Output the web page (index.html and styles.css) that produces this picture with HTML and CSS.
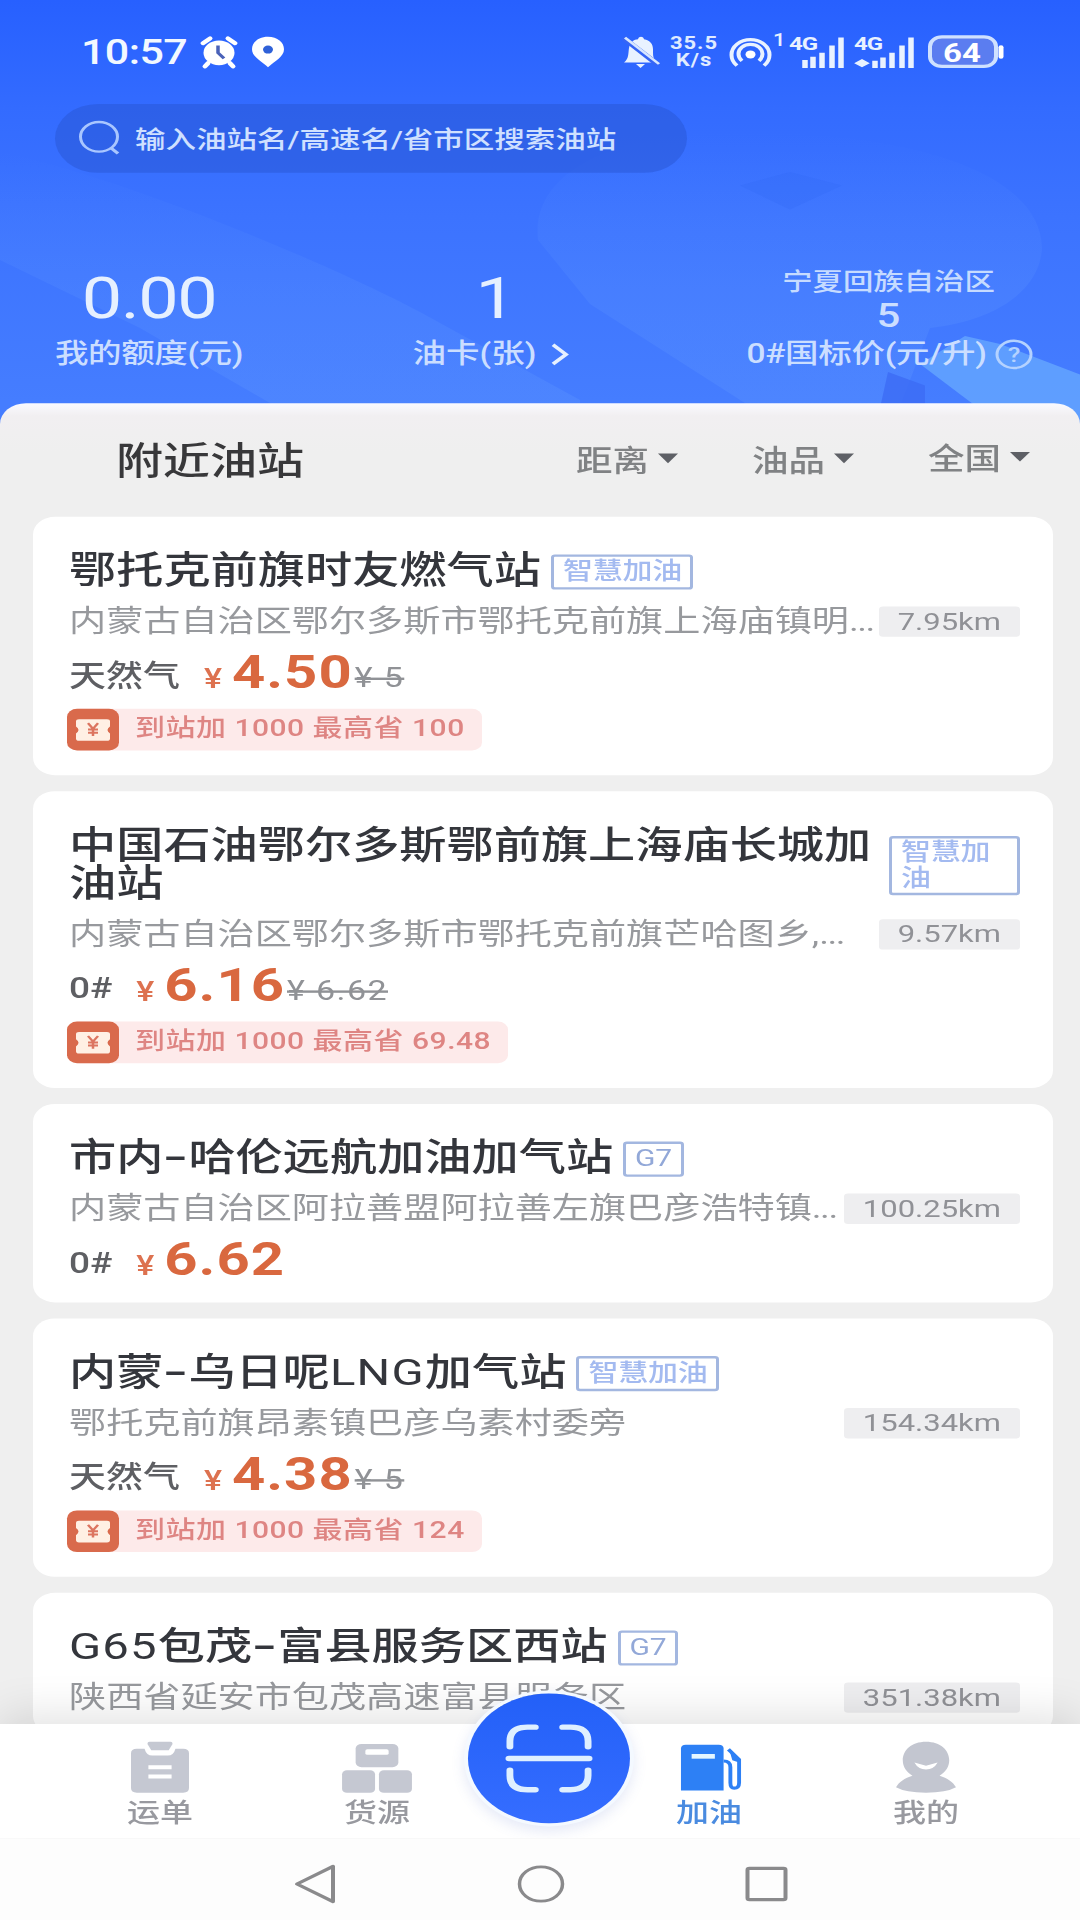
FILE: index.html
```html
<!DOCTYPE html>
<html lang="zh-CN">
<head>
<meta charset="utf-8">
<title>附近油站</title>
<link rel="stylesheet" href="styles.css">
</head>
<body>
<div class="viewport">
<div class="phone">

  <header class="hero">
    <svg class="hero-art" viewBox="0 0 1080 540" preserveAspectRatio="none" aria-hidden="true">
      <defs>
        <linearGradient id="band" x1="0" y1="0" x2="0" y2="1"><stop offset="0" stop-color="#5a92ff" stop-opacity="0"/><stop offset=".5" stop-color="#5a92ff" stop-opacity=".25"/><stop offset="1" stop-color="#5a92ff" stop-opacity=".4"/></linearGradient>
      </defs>
      <path d="M0 190C120 220 330 330 420 390L580 500V540H320L140 410L0 325z" fill="url(#band)"/>
      <path d="M538 300C530 200 640 165 740 165C900 165 1040 210 1042 310C1040 360 1000 400 930 410L890 540H790L590 380z" fill="url(#band)"/>
      <path d="M740 232L790 215L842 232L790 262z" fill="#2f66f2" opacity=".25"/>
      <path d="M920 455L965 420L1000 430L1080 468V540H1010z" fill="#6db0ff" opacity=".65"/>
      <path d="M888 465L925 482V510H880z" fill="#3c6cf5" opacity=".8"/>
    </svg>

    <div class="status">
      <span class="clock">10:57</span>
      <svg class="i-alarm" width="38" height="40" viewBox="0 0 38 40"><circle cx="19" cy="21" r="15.500" fill="#fff"/><path d="M3 9L10 3M35 9L28 3M8 34L5 38M30 34L33 38" stroke="#fff" stroke-width="5" stroke-linecap="round"/><path d="M18 12V21L24 28" fill="none" stroke="#4a62b8" stroke-width="3.500"/></svg>
      <svg class="i-pin" width="34" height="40" viewBox="0 0 34 40"><path d="M17 1C7.500 1 1 8 1 16.500C1 26 10 31 17 39C24 31 33 26 33 16.500C33 8 26.500 1 17 1z" fill="#fff"/><circle cx="17" cy="17" r="5" fill="#2f61d8"/></svg>
      <span class="grow"></span>
      <svg width="37" height="42" viewBox="0 0 37 42"><path d="M2 34C7 29 6 24 7 16C8 9 12 5 16 5C17 1 21 1 22 5C28 6 31 11 31 18C31 27 31 29 35 34zM14 36H23L18.500 41z" fill="#e9f2ff"/><path d="M1 3L36 37" stroke="#3565f6" stroke-width="6"/><path d="M3 3L37 36" stroke="#d7e6ff" stroke-width="3"/></svg>
      <span class="speed"><span>35.5</span><span>K/s</span></span>
      <svg class="i-hot" width="43" height="40" viewBox="0 0 43 40"><g fill="none" stroke="#e9f2ff" stroke-width="4"><path d="M8 37A19 19 0 1 1 35 37"/><path d="M13 31A12 12 0 1 1 30 31"/></g><circle cx="21.500" cy="23" r="5" fill="#fff"/></svg>
      <span class="hot-n">1</span>
      <svg class="i-sig1" width="56" height="42" viewBox="0 0 56 42"><text class="net" x="0" y="19">4G</text><path d="M16 41V31M24 41V27M33 41V22M43 41V13M52 41V3" stroke="#e9f2ff" stroke-width="5.500"/></svg>
      <svg class="i-sig2" width="61" height="42" viewBox="0 0 61 42"><text class="net" x="0" y="19">4G</text><path d="M21 41V32M29 41V28M38 41V22M48 41V13M57 41V3" stroke="#e9f2ff" stroke-width="5.500"/><path d="M2 35L8 31L14 35L8 39z" fill="#e9f2ff" stroke="#e9f2ff" stroke-width="2"/></svg>
      <svg class="i-bat" width="76" height="42" viewBox="0 0 76 42"><rect x="2" y="2" width="66" height="37" rx="12" fill="#5b7df0" stroke="#cfe1ff" stroke-width="4"/><path d="M73 15V27" stroke="#fff" stroke-width="5" stroke-linecap="round"/><text class="bat" x="34" y="33" text-anchor="middle">64</text></svg>
    </div>

    <div class="search">
      <svg width="42" height="44" viewBox="0 0 42 44"><circle cx="20" cy="21" r="18.500" fill="none" stroke="#a9c6ff" stroke-width="3"/><path d="M32 35L39 42" stroke="#a9c6ff" stroke-width="3.500"/></svg>
      <span>输入油站名/高速名/省市区搜索油站</span>
    </div>

    <div class="stats">
      <div class="stat s1"><b>0.00</b><span>我的额度(元)</span></div>
      <div class="stat s2"><b>1</b><span>油卡(张)<svg width="20" height="30" viewBox="0 0 20 30"><path d="M3 3L16 15L3 27" fill="none" stroke="#e6f0ff" stroke-width="4"/></svg></span></div>
      <div class="stat s3"><i>宁夏回族自治区</i><em>5</em><span>0#国标价(元/升)<svg width="38" height="38" viewBox="0 0 38 38"><circle cx="19" cy="19" r="17" fill="none" stroke="#b4d2ff" stroke-width="3"/><text class="qm" x="19" y="28" text-anchor="middle">?</text></svg></span></div>
    </div>
  </header>

  <main class="panel">
    <div class="filters">
      <h1>附近油站</h1>
      <span class="filter f1">距离</span>
      <span class="filter f2">油品</span>
      <span class="filter f3">全国</span>
    </div>

    <div class="list">
      <article class="card">
        <div class="head"><h2>鄂托克前旗时友燃气站</h2><span class="tag">智慧加油</span></div>
        <div class="addr"><p>内蒙古自治区鄂尔多斯市鄂托克前旗上海庙镇明<span class="dots">...</span></p><span class="km">7.95km</span></div>
        <div class="price"><span class="fuel">天然气</span><span class="yen">¥</span><b>4.50</b><s>¥ 5</s></div>
        <div class="coupon"><svg width="52" height="52" viewBox="0 0 52 52"><rect width="52" height="52" rx="10" fill="#d96a4c"/><path d="M12 13H40Q43 13 43 16V22Q38 26 43 31V37Q43 40 40 40H12Q9 40 9 37V31Q14 26 9 22V16Q9 13 12 13z" fill="#fff0e4"/><path d="M21 18L26 25L31 18M26 25V34M21 26H31M21 30H31" stroke="#dc7560" stroke-width="2.500" fill="none"/></svg><span>到站加 1000 最高省 100</span></div>
      </article>

      <article class="card">
        <div class="head"><h2>中国石油鄂尔多斯鄂前旗上海庙长城加油站</h2><span class="tag tag-wrap">智慧加油</span></div>
        <div class="addr"><p>内蒙古自治区鄂尔多斯市鄂托克前旗芒哈图乡,<span class="dots">...</span></p><span class="km">9.57km</span></div>
        <div class="price"><span class="fuel">0#</span><span class="yen">¥</span><b>6.16</b><s>¥ 6.62</s></div>
        <div class="coupon"><svg width="52" height="52" viewBox="0 0 52 52"><rect width="52" height="52" rx="10" fill="#d96a4c"/><path d="M12 13H40Q43 13 43 16V22Q38 26 43 31V37Q43 40 40 40H12Q9 40 9 37V31Q14 26 9 22V16Q9 13 12 13z" fill="#fff0e4"/><path d="M21 18L26 25L31 18M26 25V34M21 26H31M21 30H31" stroke="#dc7560" stroke-width="2.500" fill="none"/></svg><span>到站加 1000 最高省 69.48</span></div>
      </article>

      <article class="card">
        <div class="head"><h2>市内<span class="dash">-</span>哈伦远航加油加气站</h2><span class="tag tag-g7">G7</span></div>
        <div class="addr"><p>内蒙古自治区阿拉善盟阿拉善左旗巴彦浩特镇<span class="dots">...</span></p><span class="km">100.25km</span></div>
        <div class="price"><span class="fuel">0#</span><span class="yen">¥</span><b>6.62</b></div>
      </article>

      <article class="card">
        <div class="head"><h2>内蒙<span class="dash">-</span>乌日呢<span class="latin">LNG</span>加气站</h2><span class="tag">智慧加油</span></div>
        <div class="addr"><p>鄂托克前旗昂素镇巴彦乌素村委旁</p><span class="km">154.34km</span></div>
        <div class="price"><span class="fuel">天然气</span><span class="yen">¥</span><b>4.38</b><s>¥ 5</s></div>
        <div class="coupon"><svg width="52" height="52" viewBox="0 0 52 52"><rect width="52" height="52" rx="10" fill="#d96a4c"/><path d="M12 13H40Q43 13 43 16V22Q38 26 43 31V37Q43 40 40 40H12Q9 40 9 37V31Q14 26 9 22V16Q9 13 12 13z" fill="#fff0e4"/><path d="M21 18L26 25L31 18M26 25V34M21 26H31M21 30H31" stroke="#dc7560" stroke-width="2.500" fill="none"/></svg><span>到站加 1000 最高省 124</span></div>
      </article>

      <article class="card">
        <div class="head"><h2><span class="latin">G65</span>包茂<span class="dash">-</span>富县服务区西站</h2><span class="tag tag-g7">G7</span></div>
        <div class="addr"><p>陕西省延安市包茂高速富县服务区</p><span class="km">351.38km</span></div>
      </article>
    </div>
  </main>

  <nav class="tabs">
    <a class="tab t1"><svg width="58" height="66" viewBox="0 0 60 68"><path d="M6 10H14Q16 19 22 19H38Q44 19 46 10H54Q60 10 60 16V61Q60 67 54 67H6Q0 67 0 61V16Q0 10 6 10z" fill="#c5c8d2"/><path d="M19 1H41Q43 1 43 4L39 12H21L17 4Q17 1 19 1z" fill="#c5c8d2"/><path d="M18 34H42M18 46H42" stroke="#fff" stroke-width="5"/></svg><span>运单</span></a>
    <a class="tab t2"><svg width="70" height="66" viewBox="0 0 72 68"><g fill="#c5c8d2"><rect x="14" y="4" width="44" height="30" rx="6"/><rect x="0" y="38" width="34" height="29" rx="5"/><rect x="38" y="38" width="34" height="29" rx="5"/></g><rect x="24" y="11" width="24" height="7" rx="2" fill="#fff"/></svg><span>货源</span></a>
    <a class="fab"><svg width="86" height="86" viewBox="0 0 88 88"><path d="M4 29V22Q4 4 22 4H30M58 4H66Q84 4 84 22V29M84 59V66Q84 84 66 84H58M30 84H22Q4 84 4 66V59M3 44H85" fill="none" stroke="#dff0ff" stroke-width="7" stroke-linecap="round"/></svg></a>
    <a class="tab t3"><svg width="62" height="66" viewBox="0 0 64 68"><path d="M6 5H40Q45 5 45 10V64H1V10Q1 5 6 5z" fill="#2d80f5"/><path d="M12 20H36" stroke="#e4f6ff" stroke-width="6"/><path d="M45 26Q52 26 52 34V54Q52 61 56 61Q61 61 61 54V24L50 11" fill="none" stroke="#2d80f5" stroke-width="4"/><path d="M51 12L61 22V28L54 25z" fill="#2d80f5"/></svg><span>加油</span></a>
    <a class="tab t4"><svg width="60" height="66" viewBox="0 0 62 68"><path d="M31 1C16 1 7 12 7 25C7 34 11 40 17 45C9 48 3 53 0 60Q10 67 31 67T62 60C59 53 53 48 45 45C51 40 55 34 55 25C55 12 46 1 31 1z" fill="#c3c6d0"/><path d="M19 28L31 32L43 28Q39 37 31 37T19 28z" fill="#fff"/></svg><span>我的</span></a>
  </nav>

  <footer class="sysnav">
    <svg width="44" height="52" viewBox="0 0 44 52"><path d="M40 4V48L4 26z" fill="none" stroke="#8a8a8c" stroke-width="4" stroke-linejoin="round"/></svg>
    <svg width="48" height="48" viewBox="0 0 48 48"><circle cx="24" cy="24" r="21.500" fill="none" stroke="#8a8a8c" stroke-width="3.500"/></svg>
    <svg width="44" height="44" viewBox="0 0 44 44"><rect x="2.500" y="2.500" width="38" height="39" rx="2" fill="none" stroke="#8a8a8c" stroke-width="4"/></svg>
  </footer>

</div>
</div>
</body>
</html>
```
FILE: styles.css
```css
* { box-sizing: border-box; }
body, h1, h2, p { margin: 0; }
body { font-family: Roboto, "Noto Sans CJK SC", sans-serif; background: #efeff0; }
svg { display: block; flex: none; overflow: visible; }

/* 1080x2400 phone layout squeezed into a 1080x1920 frame */
.viewport { width: 1080px; height: 1920px; overflow: hidden; }
.phone {
  width: 1080px; height: 2400px; overflow: hidden;
  display: flex; flex-direction: column;
  transform: scaleY(.8); transform-origin: 0 0;
}

.hero {
  position: relative; flex: none; height: 540px; color: #e6f0ff;
  background: linear-gradient(#2760ff 0, #336bff 25%, #3c73ff 50%, #457dff 93%);
}
.hero-art { position: absolute; left: 0; top: 0; width: 1080px; height: 540px; }

.status { position: relative; display: flex; align-items: center; height: 130px; padding: 0 76px 0 81px; }
.clock { font-size: 43px; font-weight: 500; letter-spacing: -.6px; width: 119px; color: #f2f8ff; }
.i-pin { margin-left: 13px; }
.grow { flex: 1; }
.speed { display: flex; flex-direction: column; align-items: center; font-size: 22px; line-height: 22px; font-weight: 700; width: 60px; margin: 0 5px; color: #e0ecff; letter-spacing: 1px; }
.hot-n { font-size: 22px; font-weight: 500; width: 17px; padding-left: 1px; align-self: flex-start; margin-top: 38px; }
.i-sig2 { margin-left: 9px; }
.i-bat { margin-left: 13px; }
.net { font: 700 24px Roboto, sans-serif; fill: #e9f2ff; letter-spacing: -1px; }
.bat { font: 700 33px Roboto, sans-serif; fill: #fff; }
.qm { font: 500 26px Roboto, sans-serif; fill: #b4d2ff; }

.search {
  position: relative; display: flex; align-items: center; gap: 14px;
  width: 632px; height: 86px; margin-left: 55px; padding: 0 0 3px 24px; border-radius: 43px;
  background: rgba(40, 86, 212, .5); font-size: 30.5px; font-weight: 500; color: #cfe0ff; white-space: nowrap;
}

.stats { position: relative; display: grid; grid-template-columns: 298px 387px 395px; height: 287px; white-space: nowrap; }
.stat { display: flex; flex-direction: column; align-items: center; justify-content: flex-end; padding-bottom: 37px; }
.stat b { font-size: 72px; font-weight: 400; line-height: 84px; margin-bottom: 4px; letter-spacing: -1.5px; }
.stat span { display: flex; align-items: center; font-size: 33.5px; line-height: 46px; font-weight: 500; color: #cbdeff; }
.s1 span { letter-spacing: -.4px; }
.s2 span svg { margin-left: 14px; }
.s2 b { margin-left: 7px; }
.s3 { padding-left: 14px; }
.s3 i { font-style: normal; font-size: 30.4px; line-height: 40px; font-weight: 500; color: #c6dbff; margin-left: -2px; }
.s3 em { font-style: normal; font-size: 42px; line-height: 44px; color: #cbdeff; font-weight: 500; margin: 0 0 3px -2px; }
.s3 span { letter-spacing: -.3px; }
.s3 span svg { margin-left: 8px; }

.panel {
  position: relative; flex: none; height: 1651px; margin-top: -36px; overflow: hidden;
  border-radius: 26px 26px 0 0;
  background: linear-gradient(#fafaff 0, #f1eff1 16px, #efefef 60px);
}
.filters { display: flex; align-items: center; height: 142px; padding: 0 0 4px 116px; }
.filters h1 { font-size: 47px; font-weight: 500; color: #38383a; width: 460px; margin-top: -1px; }
.filter { display: flex; align-items: center; font-size: 36.5px; font-weight: 500; color: #808284; width: 176px; }
.filter::after { content: ""; margin: 0 0 0 9px; border: 10px solid transparent; border-top: 12px solid #5e6066; border-bottom: 0; }
.f3 { width: 110px; margin-top: -5px; }

.list { display: flex; flex-direction: column; gap: 20px; padding: 0 27px 0 33px; }
.card { flex: none; padding: 43px 33px 20px 36px; border-radius: 22px; background: #fff; }
.head { display: flex; align-items: center; gap: 10px; }
.head h2 { font-size: 47.2px; line-height: 48px; font-weight: 500; color: #34363c; }
.latin { font-weight: 400; letter-spacing: 1.2px; }
.dash { display: inline-block; width: 25px; text-align: center; transform: scaleX(1.5); }
.tag {
  flex: none; margin-top: 3px; padding: 1px 8px 3px 9px; border: 3px solid #a3b7e0; border-radius: 4px;
  font-size: 30px; line-height: 34px; height: 44px; font-weight: 500; color: #a3baf0;
  white-space: nowrap; letter-spacing: -.2px;
}
.tag-wrap { width: 131px; height: 74px; line-height: 32px; white-space: normal; }
.tag-g7 { font-weight: 400; color: #92a8d8; padding: 1px 9px; }
.addr { display: flex; align-items: center; justify-content: space-between; height: 50px; margin-top: 15px; }
.addr p { font-size: 37.15px; line-height: 50px; color: #97999d; white-space: nowrap; }
.dots { letter-spacing: -1.5px; }
.km { flex: none; height: 38px; padding: 0 19px; line-height: 38px; font-size: 31px; background: #eeeef0; color: #909196; border-radius: 4px; }
.price { display: flex; align-items: center; height: 58px; margin-top: 14px; line-height: 58px; }
.fuel { font-size: 37px; font-weight: 500; color: #5e5f63; margin-right: 24px; }
.yen { font-size: 34px; font-weight: 500; color: #dd7250; width: 28px; padding-top: 5px; }
.price b { font-size: 58px; font-weight: 700; color: #d9683f; letter-spacing: 1px; margin-top: -11px; }
.price s { font-size: 34px; color: #909296; padding-top: 4px; margin-left: 2px; letter-spacing: 1.4px; text-decoration-thickness: 3px; }
.coupon { display: flex; width: fit-content; height: 52px; margin: 12px 0 11px; background: #fdeaea; border-radius: 10px; }
.coupon svg { margin-left: -2px; }
.coupon span { padding: 0 17px 0 16px; font-size: 30px; line-height: 48px; font-weight: 500; color: #de8583; letter-spacing: .5px; white-space: pre; }

.tabs {
  position: relative; flex: none; display: flex; height: 143px; background: #fff;
  padding-left: 100px; box-shadow: 0 -10px 50px rgba(0, 0, 0, .12);
}
.tab { display: flex; flex-direction: column; align-items: center; width: 120px; padding-top: 21px; font-size: 33px; line-height: 50px; color: #98999f; font-weight: 500; }
.t2 { margin-left: 97px; }
.t3 { margin-left: 212px; color: #4a8be0; }
.t3 svg { margin-left: 4px; }
.t4 { margin-left: 97px; }
.fab {
  position: absolute; left: 468px; top: -38px; width: 162px; height: 162px; border-radius: 50%;
  display: flex; align-items: center; justify-content: center;
  background: linear-gradient(#2360f8, #356dff); box-shadow: 0 0 0 4px #f4f9ff, 0 6px 14px 4px rgba(80, 110, 200, .15);
}
.sysnav { position: relative; flex: none; display: flex; align-items: center; height: 102px; padding: 12px 0 0 293px; background: #fdfdfd; }
.sysnav svg + svg { margin-left: 180px; }
```
